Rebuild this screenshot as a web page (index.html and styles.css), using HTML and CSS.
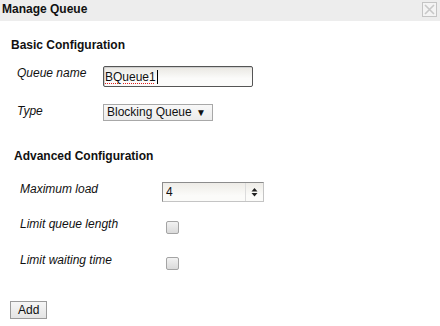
FILE: index.html
```html
<!DOCTYPE html>
<html lang="en">
<head>
    <meta charset="UTF-8">
    <title>Manage Queue</title>
    <link rel="stylesheet" href="styles.css">
</head>
<body>
    <div class="titlebar">
        <span class="title">Manage Queue</span>
        <svg class="close" width="15" height="15" viewBox="0 0 15 15">
            <rect x="0.5" y="0.5" width="14" height="14" fill="#f4f4f4" stroke="#c4c4c4"/>
            <path d="M3 3 L12 12 M12 3 L3 12" stroke="#c8c8c8" stroke-width="1.6"/>
        </svg>
    </div>

    <h2 class="section basic">Basic Configuration</h2>
    <div class="rows basic-rows">
        <label class="label">Queue name</label>
        <div class="field"><span class="misspelled">BQueue1</span><span class="caret"></span></div>

        <label class="label">Type</label>
        <div><button class="select" type="button">Blocking Queue <span class="arrow">▼</span></button></div>
    </div>

    <h2 class="section advanced">Advanced Configuration</h2>
    <div class="rows advanced-rows">
        <label class="label">Maximum load</label>
        <div class="number">
            <input class="number-value" type="text" value="4">
            <span class="spinner">
                <svg width="7" height="12" viewBox="0 0 7 12">
                    <path d="M3.5 2 L6.5 5.5 L0.5 5.5 Z M0.5 7 L6.5 7 L3.5 10.5 Z" fill="#222"/>
                </svg>
            </span>
        </div>

        <label class="label">Limit queue length</label>
        <div><input class="check" type="checkbox"></div>

        <label class="label">Limit waiting time</label>
        <div><input class="check" type="checkbox"></div>
    </div>

    <button class="add" type="button">Add</button>
</body>
</html>
```

FILE: styles.css
```css
body {
    margin: 0;
    font-family: "Liberation Sans", Arial, sans-serif;
    font-size: 12px;
    line-height: 14px;
    color: #111;
    background: #fff;
}

.titlebar {
    height: 21px;
    background-color: #ededed;
    display: flex;
    justify-content: space-between;
    align-items: flex-start;
    padding: 0 3px 0 2px;
}

.title {
    font-weight: bold;
    line-height: 19px;
}

.close {
    margin-top: 2px;
    display: block;
}

.section {
    font-size: 12px;
    line-height: 14px;
    font-weight: bold;
    margin: 0;
}

.section.basic {
    margin: 17px 0 0 11px;
}

.section.advanced {
    margin: 28px 0 0 14px;
}

.rows {
    display: grid;
    align-items: start;
}

.basic-rows {
    margin: 14px 0 0 17px;
    grid-template-columns: 86px 150px;
    row-gap: 17px;
}

.advanced-rows {
    margin: 19px 0 0 20px;
    grid-template-columns: 142px 102px;
    row-gap: 15px;
}

.label {
    font-style: italic;
}

.field {
    box-sizing: border-box;
    height: 21px;
    width: 150px;
    border: 1px solid #555;
    border-radius: 2px;
    padding: 2px 1px;
    background: linear-gradient(#e9e7e2, #fbfbfa 60%);
    box-shadow: inset 1px 1px 0 #cfcfcf;
    display: flex;
    align-items: center;
}

.misspelled {
    text-decoration: underline dotted #e02020;
    text-decoration-thickness: 1px;
    text-underline-offset: 2px;
}

.caret {
    width: 1px;
    height: 14px;
    background: #000;
    margin-left: 1px;
}

.select {
    font: inherit;
    color: #111;
    height: 17px;
    margin: 0;
    padding: 0 6px 0 3px;
    border: 1px solid #a8a8a8;
    background: linear-gradient(#f8f8f8, #ececec);
    text-align: left;
}

.arrow {
    font-size: 10px;
    margin-left: 1px;
}

.number {
    box-sizing: border-box;
    width: 102px;
    height: 20px;
    display: flex;
    border: 1px solid #8c8c8c;
    border-right-color: #c4c4c4;
    border-bottom-color: #c4c4c4;
    background: linear-gradient(#eeece7, #fbfbf9 70%);
}

.number-value {
    flex: 1;
    min-width: 0;
    font: inherit;
    color: #111;
    border: none;
    background: transparent;
    padding: 0 3px;
    margin: 0;
    outline: none;
}

.spinner {
    width: 17px;
    border-left: 1px solid #dcdcdc;
    display: flex;
    align-items: center;
    justify-content: center;
}

.check {
    appearance: none;
    box-sizing: border-box;
    width: 13px;
    height: 13px;
    margin: 4px 0 4px 4px;
    border: 1px solid #a4a4a4;
    border-radius: 2px;
    background: linear-gradient(#f2f2f2, #dadada);
    display: block;
}

.add {
    font: inherit;
    color: #111;
    margin: 27px 0 0 10px;
    padding: 1px 7px;
    height: 18px;
    border: 1px solid #9a9a9a;
    background: linear-gradient(#f6f6f6, #e4e4e4);
    display: block;
}
```
